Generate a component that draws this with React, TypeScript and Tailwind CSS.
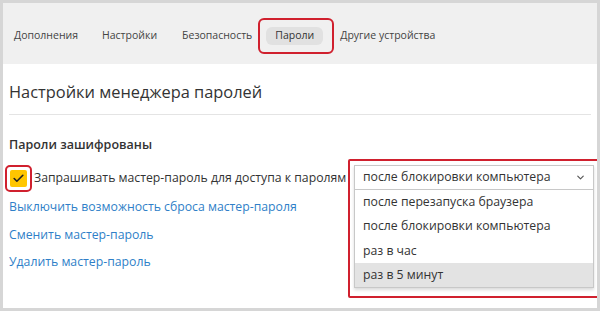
import { Check, ChevronDown } from "lucide-react";

const options = [
  "после перезапуска браузера",
  "после блокировки компьютера",
  "раз в час",
  "раз в 5 минут",
];

export default function App() {
  return (
    <div
      className="w-[600px] h-[311px] border-[3px] border-[#d6d6d6] bg-white flex flex-col overflow-hidden"
      style={{ fontFamily: '"Open Sans", "Noto Sans", sans-serif' }}
    >
      {/* вкладки */}
      <div className="h-[61px] bg-[#f0f0f0] flex items-center pl-[11px] pt-[5px] text-[10.5px] text-[#444]">
        <div>Дополнения</div>
        <div className="ml-[24px]">Настройки</div>
        <div className="ml-[25px]">Безопасность</div>
        <div className="ml-[6px] rounded-[6px] border-[2px] border-[#d0202e] pl-[6px] pr-[9px] py-[7px]">
          <div className="bg-[#e1e1e1] rounded-[6px] px-[9px] py-[1px] text-[#333]">Пароли</div>
        </div>
        <div className="ml-[6px]">Другие устройства</div>
      </div>

      <div className="px-[6px] text-[#333]">
        <h1 className="text-[16.4px] leading-none pt-[20px] pb-[14px] border-b border-[#e4e4e4]">
          Настройки менеджера паролей
        </h1>

        <div className="pt-[21px] text-[12.5px] font-semibold">Пароли зашифрованы</div>

        <div className="relative mt-[10px] flex items-center h-[27px] text-[12.25px]">
          <div className="rounded-[5px] border-[2px] border-[#d0202e] p-[3px] -ml-[4px]">
            <div className="w-[17px] h-[17px] bg-[#ffc600] rounded-[2px] flex items-center justify-center">
              <Check size={13} strokeWidth={3} color="#222" />
            </div>
          </div>
          <span className="ml-[2px]">Запрашивать мастер-пароль для доступа к паролям</span>

          {/* выпадающий список */}
          <div className="absolute left-[339px] -top-[6px] w-[253px] h-[139px] rounded-[2px] border-[2px] border-[#d0202e] z-10">
            <div className="absolute left-[4px] top-[4px] w-[240px] bg-white border border-[#c8c8c8] shadow-[0_2px_3px_rgba(0,0,0,0.15)]">
              <div className="h-[24px] flex items-center justify-between pl-[8px] pr-[7px] border-b border-[#c8c8c8]">
                <span>после блокировки компьютера</span>
                <ChevronDown size={11} strokeWidth={2.5} color="#555" />
              </div>
              {options.map((o, i) => (
                <div
                  key={o}
                  className={
                    i === 3
                      ? "h-[24.3px] flex items-center pl-[8px] bg-[#e3e3e3]"
                      : "h-[24.3px] flex items-center pl-[8px]"
                  }
                >
                  {o}
                </div>
              ))}
            </div>
          </div>
        </div>

        <div className="flex flex-col text-[12.25px] text-[#2f7fc8] mt-[2px]">
          <a className="h-[27px] flex items-center">Выключить возможность сброса мастер-пароля</a>
          <a className="h-[28px] flex items-center">Сменить мастер-пароль</a>
          <a className="h-[27px] flex items-center">Удалить мастер-пароль</a>
        </div>
      </div>
    </div>
  );
}
